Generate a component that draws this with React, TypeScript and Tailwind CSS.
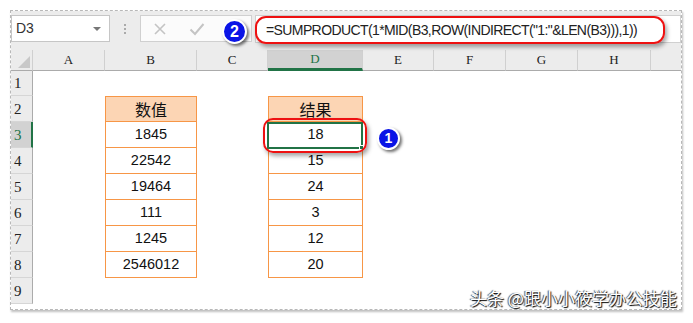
import React from "react";

const cols = ["A", "B", "C", "D", "E", "F", "G", "H"];
const colW = [72, 92, 71, 95, 71, 72, 72, 73];
const rowH = [25, 26, 26, 26, 26, 26, 26, 26, 26];
const valsB = ["数值", "1845", "22542", "19464", "111", "1245", "2546012"];
const valsD = ["结果", "18", "15", "24", "3", "12", "20"];

function Badge({ n, size }: { n: string; size: string }) {
  return (
    <div
      className={`flex items-center justify-center rounded-full bg-[#0a14e6] border-[2px] border-white text-white font-bold shadow-[2px_2px_3px_rgba(0,0,0,0.55)] ${size}`}
      style={{ fontFamily: '"Liberation Sans", Arial, sans-serif' }}
    >
      {n}
    </div>
  );
}

function Cell({ col, row }: { col: number; row: number }) {
  // col index 0..7, row 1..9
  const inTable = (col === 1 || col === 3) && row >= 2 && row <= 8;
  if (!inTable) return <div className="bg-white" />;
  const text = col === 1 ? valsB[row - 2] : valsD[row - 2];
  const head = row === 2;
  return (
    <div
      className={`flex items-center justify-center border-x border-b border-[#f79646] ${head ? "border-t bg-[#fcd5b4] text-[16px] text-[#111]" : "bg-white text-[14.5px] text-[#111]"}`}
      style={{ fontFamily: head ? '"Noto Sans CJK SC", sans-serif' : '"Liberation Sans", Arial, sans-serif' }}
    >
      {text}
    </div>
  );
}

export default function App() {
  return (
    <div className="w-[693px] h-[323px] bg-white relative overflow-hidden">
      <div className="absolute left-[10px] top-[10px] w-[672px] h-[300px] border border-dashed border-[#b8b8b8] shadow-[1px_2px_2px_rgba(0,0,0,0.25)] overflow-hidden bg-white flex flex-col">
        {/* formula toolbar */}
        <div className="h-[39px] bg-[#ececec] flex items-start pt-[4px] shrink-0">
          <div className="w-[99px] h-[27px] bg-white border border-[#c6c6c6] flex items-center pl-[4px] pr-[8px] justify-between">
            <span className="text-[14px] text-[#333]" style={{ fontFamily: '"Liberation Sans", Arial, sans-serif' }}>D3</span>
            <span className="w-0 h-0 border-x-[4px] border-x-transparent border-t-[4px] border-t-[#777]" />
          </div>
          <div className="w-[30px] h-[27px] flex flex-col items-center justify-center gap-[2px]">
            <span className="w-[2px] h-[2px] bg-[#aaa]" />
            <span className="w-[2px] h-[2px] bg-[#aaa]" />
            <span className="w-[2px] h-[2px] bg-[#aaa]" />
          </div>
          <div className="w-[112px] h-[27px] bg-[#fbfbfb] border border-[#d0d0d0] flex items-center pl-[12px] gap-[22px]">
            <svg width="14" height="14" viewBox="0 0 14 14">
              <path d="M2 2L12 12M12 2L2 12" stroke="#c4c4c4" strokeWidth="1.6" fill="none" />
            </svg>
            <svg width="16" height="14" viewBox="0 0 16 14">
              <path d="M1.5 7.5L6 12L14.5 2" stroke="#c4c4c4" strokeWidth="2" fill="none" />
            </svg>
          </div>
          <div className="ml-[3px] flex-1 h-[28px] bg-white border border-[#d0d0d0]" />
        </div>

        {/* sheet grid */}
        <div
          className="grid grid-cols-[22px_72px_92px_71px_95px_71px_72px_72px_73px_1fr]"
          style={{ gridTemplateRows: `21px ${rowH.map((h) => h + "px").join(" ")}` }}
        >
          {/* column headers */}
          <div className="bg-[#ececec] border-b border-[#ababab] border-r border-r-[#d0d0d0] relative">
            <span className="absolute right-[2px] bottom-[2px] w-0 h-0 border-l-[12px] border-l-transparent border-b-[12px] border-b-[#c8c8c8]" />
          </div>
          {cols.map((c, i) => (
            <div
              key={c}
              className={`flex items-center justify-center text-[13px] border-r border-[#d0d0d0] ${c === "D" ? "bg-[#d2d2d2] text-[#217346] border-b-[3px] border-b-[#217346]" : "bg-[#ececec] text-[#222] border-b border-b-[#ababab]"}`}
              style={{ fontFamily: '"Liberation Serif", "Times New Roman", serif', width: colW[i] }}
            >
              {c}
            </div>
          ))}
          <div className="bg-[#ececec] border-b border-[#ababab]" />

          {rowH.map((_, ri) => {
            const row = ri + 1;
            const sel = row === 3;
            return (
              <React.Fragment key={row}>
                <div
                  className={`flex items-end pl-[3px] pb-[1px] text-[15px] border-b border-[#d6d6d6] ${sel ? "bg-[#d2d2d2] text-[#217346] border-r-[2px] border-r-[#217346]" : "bg-[#ececec] text-[#222] border-r border-r-[#ababab]"}`}
                  style={{ fontFamily: '"Liberation Serif", "Times New Roman", serif' }}
                >
                  {row}
                </div>
                {cols.map((c, ci) => (
                  <Cell key={c} col={ci} row={row} />
                ))}
                <div className="bg-white" />
              </React.Fragment>
            );
          })}
        </div>
      </div>

      {/* selected cell D3 */}
      <div className="absolute left-[267px] top-[122px] w-[96px] h-[27px] border-[2px] border-[#217346]">
        <span className="absolute right-[-3px] bottom-[-3px] w-[5px] h-[5px] bg-[#217346] border border-white" />
      </div>
      {/* red highlight around D3 */}
      <div className="absolute left-[263px] top-[118px] w-[104px] h-[35px] border-[2px] border-[#ee1111] rounded-[10px] shadow-[2px_3px_4px_rgba(0,0,0,0.35)]" />

      {/* red highlight around formula */}
      <div className="absolute left-[255px] top-[16px] w-[410px] h-[28px] border-[2px] border-[#ee1111] rounded-[11px] shadow-[2px_3px_4px_rgba(0,0,0,0.35)] flex items-center pl-[9px]">
        <span className="text-[14px] tracking-[-0.6px] text-[#222] whitespace-nowrap" style={{ fontFamily: '"Liberation Sans", Arial, sans-serif' }}>
          =SUMPRODUCT(1*MID(B3,ROW(INDIRECT("1:"&amp;LEN(B3))),1))
        </span>
      </div>

      <div className="absolute left-[222px] top-[19px]">
        <Badge n="2" size="w-[25px] h-[25px] text-[16px]" />
      </div>
      <div className="absolute left-[377px] top-[127px]">
        <Badge n="1" size="w-[23px] h-[23px] text-[14px]" />
      </div>

      {/* watermark */}
      <div
        className="absolute left-[470px] top-[285px] text-[17px] text-white whitespace-nowrap [text-shadow:1px_1px_1px_#000,-1px_0_1px_#444]"
        style={{ fontFamily: '"Noto Sans CJK SC", sans-serif' }}
      >
        头条 @跟小小筱学办公技能
      </div>
    </div>
  );
}
